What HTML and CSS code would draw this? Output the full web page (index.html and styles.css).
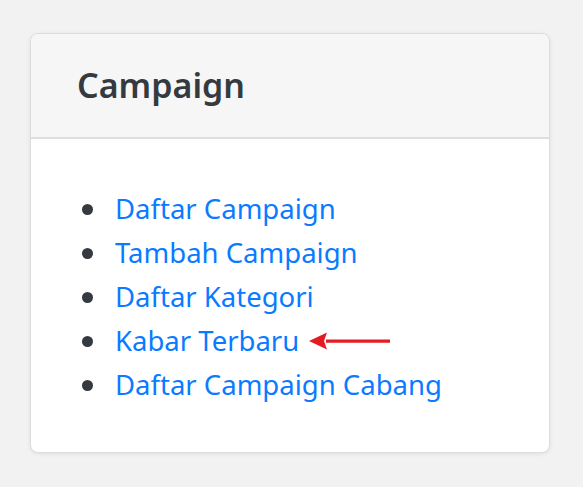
FILE: index.html
```html
<!DOCTYPE html>
<html>
<head>
<meta charset="utf-8">
<link rel="stylesheet" href="styles.css">
</head>
<body>
<div class="card">
  <div class="card-header"><h2 class="title">Campaign</h2></div>
  <div class="card-body">
    <ul class="menu">
      <li><a href="#">Daftar Campaign</a></li>
      <li><a href="#">Tambah Campaign</a></li>
      <li><a href="#">Daftar Kategori</a></li>
      <li><a href="#">Kabar Terbaru</a><span class="arrow"><svg width="81" height="18" viewBox="0 0 81 18"><path d="M17 7.5H81V10.8H17Z" fill="#e31b23"/><path d="M0 9L18 0.5L15 9L18 17.5Z" fill="#e31b23"/></svg></span></li>
      <li><a href="#">Daftar Campaign Cabang</a></li>
    </ul>
  </div>
</div>
</body>
</html>
```
FILE: styles.css
```css
html, body { margin: 0; padding: 0; }
body {
  background: #f2f2f2;
  font-family: "Noto Sans", "Open Sans", sans-serif;
  width: 583px;
  height: 487px;
  overflow: hidden;
}
.card {
  box-sizing: border-box;
  margin: 33px 0 0 30px;
  width: 520px;
  height: 420px;
  background: #fff;
  border: 1px solid #dcdcdc;
  border-radius: 8px;
  box-shadow: 0 1px 4px rgba(0,0,0,0.08);
  overflow: hidden;
}
.card-header {
  box-sizing: border-box;
  height: 105px;
  background: #f6f6f6;
  border-bottom: 2px solid #dedede;
  display: flex;
  align-items: center;
  padding: 0 0 2px 46px;
}
.title {
  margin: 0;
  font-size: 34px;
  font-weight: 600;
  color: #343a40;
}
.card-body { padding: 48px 0 0 47px; }
.menu {
  margin: 0;
  padding: 0;
  list-style: none;
  font-size: 27.5px;
  line-height: 44px;
}
.menu li { display: flex; align-items: center; }
.menu li::before {
  content: "";
  width: 11px;
  height: 11px;
  border-radius: 50%;
  background: #343a40;
  margin: 0 22px 0 4px;
  flex: none;
}
.menu a { color: #0a7bff; text-decoration: none; }
.arrow { display: inline-block; margin-left: 10px; line-height: 0; }
```
